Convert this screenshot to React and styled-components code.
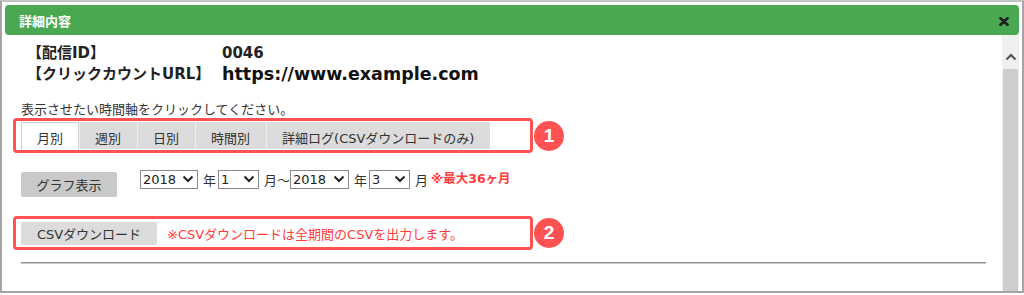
import React, { useState } from 'react';
import styled, { createGlobalStyle } from 'styled-components';

const GlobalStyle = createGlobalStyle`
  html, body {
    margin: 0;
    padding: 0;
    background: #fff;
  }
  body {
    font-family: 'DejaVu Sans', 'Noto Sans CJK JP', sans-serif;
    color: #333;
  }
`;

const TABS = ['月別', '週別', '日別', '時間別', '詳細ログ(CSVダウンロードのみ)'];
const YEARS = ['2017', '2018', '2019'];
const MONTHS = ['1', '2', '3', '4', '5', '6', '7', '8', '9', '10', '11', '12'];

const Chevron = () => (
  <svg width="12" height="8" viewBox="0 0 12 8">
    <path d="M1.5 1.5 L6 6 L10.5 1.5" fill="none" stroke="#222" strokeWidth="2" />
  </svg>
);

const DateSelect = ({ value, options, width }) => (
  <SelectWrap $width={width}>
    <NativeSelect defaultValue={value}>
      {options.map((o) => (
        <option key={o} value={o}>{o}</option>
      ))}
    </NativeSelect>
    <SelectArrow><Chevron /></SelectArrow>
  </SelectWrap>
);

const App = () => {
  const [active, setActive] = useState(0);

  return (
    <>
      <GlobalStyle />
      <Frame>
        <Header>
          <Title>詳細内容</Title>
          <CloseButton aria-label="close">
            <svg width="10" height="9" viewBox="0 0 10 9">
              <path d="M1.5 1.2 L8.5 7.8 M8.5 1.2 L1.5 7.8" stroke="#1e1e1e" strokeWidth="2.6" strokeLinecap="round" />
            </svg>
          </CloseButton>
        </Header>
        <Body>
          <Content>
            <InfoGrid>
              <InfoLabel>【配信ID】</InfoLabel>
              <InfoValue>0046</InfoValue>
              <InfoLabel>【クリックカウントURL】</InfoLabel>
              <InfoValue $large>https://www.example.com</InfoValue>
            </InfoGrid>

            <Instruction>表示させたい時間軸をクリックしてください。</Instruction>

            <Callout $pad="1px 5px">
              <TabBar>
                {TABS.map((t, i) => (
                  <Tab key={t} $active={i === active} onClick={() => setActive(i)}>
                    {t}
                  </Tab>
                ))}
              </TabBar>
              <Badge>1</Badge>
            </Callout>

            <ControlRow>
              <GrayButton $w={96} $h={25}>グラフ表示</GrayButton>
              <Selects>
                <DateSelect value="2018" options={YEARS} width={58} />
                <Unit>年</Unit>
                <DateSelect value="1" options={MONTHS} width={41} />
                <Unit $tight>月～</Unit>
                <DateSelect value="2018" options={YEARS} width={59} />
                <Unit>年</Unit>
                <DateSelect value="3" options={MONTHS} width={41} />
                <Unit $tight>月</Unit>
                <MaxNote>※最大36ヶ月</MaxNote>
              </Selects>
            </ControlRow>

            <Callout $pad="2px 5px" $mt={19}>
              <CsvRow>
                <GrayButton $w={136} $h={23} $light>CSVダウンロード</GrayButton>
                <CsvNote>※CSVダウンロードは全期間のCSVを出力します。</CsvNote>
              </CsvRow>
              <Badge>2</Badge>
            </Callout>

            <Divider />
          </Content>
          <Scrollbar>
            <ScrollArrow>
              <svg width="12" height="8" viewBox="0 0 12 8">
                <path d="M1.5 6.5 L6 2 L10.5 6.5" fill="none" stroke="#555" strokeWidth="2.2" />
              </svg>
            </ScrollArrow>
            <ScrollThumb />
          </Scrollbar>
        </Body>
      </Frame>
    </>
  );
};

const Frame = styled.div`
  box-sizing: border-box;
  width: 1024px;
  height: 293px;
  border: 2px solid #a4a4a4;
  border-top-color: #c4c4c4;
  padding: 3px 1px 0 3px;
  display: flex;
  flex-direction: column;
  background: #fff;
`;

const Header = styled.div`
  margin-right: 2px;
  height: 30px;
  background: #4ba852;
  border-radius: 4px;
  display: flex;
  align-items: center;
  justify-content: space-between;
  padding: 0 10px 0 14px;
  box-sizing: border-box;
`;

const Title = styled.span`
  color: #fff;
  font-size: 13px;
  font-weight: 700;
  font-family: 'Noto Sans CJK JP', sans-serif;
`;

const CloseButton = styled.button`
  border: none;
  background: none;
  padding: 0;
  display: flex;
  cursor: pointer;
  margin-top: 2px;
`;

const Body = styled.div`
  flex: 1;
  display: flex;
  min-height: 0;
`;

const Content = styled.div`
  flex: 1;
  padding: 8px 16px 0 16px;
  overflow: hidden;
`;

const InfoGrid = styled.div`
  display: grid;
  grid-template-columns: 195px auto;
  row-gap: 1px;
  align-items: center;
  margin-left: 6px;
`;

const InfoLabel = styled.div`
  height: 20px;
  line-height: 20px;
  font-size: 15px;
  font-weight: 700;
  color: #222;
  white-space: nowrap;
`;

const InfoValue = styled.div`
  height: 20px;
  line-height: 20px;
  font-size: ${(p) => (p.$large ? '17.5px' : '15px')};
  font-weight: 700;
  color: ${(p) => (p.$large ? '#111' : '#222')};
`;

const Instruction = styled.div`
  margin-top: 18px;
  font-size: 13px;
  line-height: 16px;
  color: #333;
`;

const Callout = styled.div`
  position: relative;
  box-sizing: border-box;
  width: 520px;
  margin-left: -8px;
  margin-top: ${(p) => p.$mt || 0}px;
  border: 3px solid #ff5252;
  border-radius: 4px;
  padding: ${(p) => p.$pad};
`;

const Badge = styled.span`
  position: absolute;
  left: calc(100% + 4px);
  top: 50%;
  transform: translateY(-50%);
  width: 30px;
  height: 30px;
  border-radius: 50%;
  background: #ff5252;
  color: #fff;
  font-family: 'Liberation Sans', sans-serif;
  font-weight: 700;
  font-size: 19px;
  display: flex;
  align-items: center;
  justify-content: center;
`;

const TabBar = styled.div`
  display: flex;
  height: 27px;
`;

const Tab = styled.div`
  box-sizing: border-box;
  padding: 2px 15px 0;
  display: flex;
  align-items: center;
  font-size: 13px;
  color: #333;
  white-space: nowrap;
  cursor: pointer;
  background: ${(p) => (p.$active ? '#fff' : '#dcdcdc')};
  border: 1px solid ${(p) => (p.$active ? '#d0d0d0' : '#dcdcdc')};
  border-left-color: ${(p) => (p.$active ? '#d0d0d0' : '#efefef')};
  border-bottom: none;
`;

const ControlRow = styled.div`
  display: flex;
  align-items: flex-start;
  margin-top: 16px;
  gap: 23px;
  height: 28px;
`;

const GrayButton = styled.button`
  width: ${(p) => p.$w}px;
  height: ${(p) => p.$h}px;
  margin-top: ${(p) => (p.$light ? 0 : 3)}px;
  border: none;
  border-radius: 2px;
  background: ${(p) => (p.$light ? '#dcdcdc' : '#c9c9c9')};
  color: #333;
  font-family: inherit;
  font-size: 13px;
  padding: 0;
  cursor: pointer;
`;

const Selects = styled.div`
  display: flex;
  align-items: center;
  height: 19px;
`;

const SelectWrap = styled.div`
  position: relative;
  width: ${(p) => p.$width}px;
  height: 19px;
`;

const NativeSelect = styled.select`
  appearance: none;
  -webkit-appearance: none;
  box-sizing: border-box;
  width: 100%;
  height: 100%;
  border: 1px solid #8a8a8a;
  border-radius: 0;
  background: #fff;
  padding: 0 0 0 2px;
  font-family: 'DejaVu Sans', sans-serif;
  font-size: 13px;
  color: #222;
  outline: none;
`;

const SelectArrow = styled.span`
  position: absolute;
  right: 4px;
  top: 6px;
  display: flex;
  pointer-events: none;
`;

const Unit = styled.span`
  font-size: 13px;
  color: #333;
  padding: 2px ${(p) => (p.$tight ? 0 : 2)}px 0 5px;
`;

const MaxNote = styled.span`
  margin-left: 3px;
  margin-top: -2px;
  font-size: 12.5px;
  font-weight: 700;
  color: #ff3b3b;
  white-space: nowrap;
`;

const CsvRow = styled.div`
  display: flex;
  align-items: center;
  gap: 10px;
  height: 24px;
`;

const CsvNote = styled.span`
  font-size: 13px;
  color: #ff3b3b;
  white-space: nowrap;
`;

const Divider = styled.div`
  margin-top: 12px;
  height: 2px;
  background: linear-gradient(#8f8f8f 50%, #c8c8c8 50%);
`;

const Scrollbar = styled.div`
  width: 17px;
  background: #f0f0f0;
  display: flex;
  flex-direction: column;
  margin-right: 2px;
`;

const ScrollArrow = styled.div`
  height: 34px;
  display: flex;
  align-items: flex-end;
  justify-content: center;
  padding-bottom: 8px;
  box-sizing: border-box;
`;

const ScrollThumb = styled.div`
  flex: 1;
  margin: 0 1px 0 1px;
  background: #cdcdcd;
`;

export default App;
